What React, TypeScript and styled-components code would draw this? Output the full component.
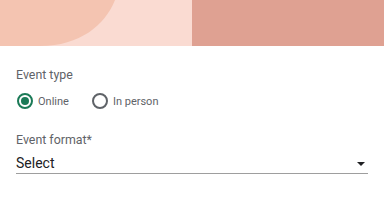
import React, { useState } from 'react';
import styled, { createGlobalStyle } from 'styled-components';

const GlobalStyle = createGlobalStyle`
  html, body {
    margin: 0;
    padding: 0;
    background: #ffffff;
    font-family: Roboto, "Liberation Sans", Arial, sans-serif;
  }
`;

const Page = styled.div`
  width: 384px;
  height: 216px;
  overflow: hidden;
  background: #ffffff;
`;

const Banner = styled.div`
  display: grid;
  grid-template-columns: 192px 1fr;
  height: 46px;
`;

const BannerLeft = styled.div`
  background: #fadbd2;
  svg {
    display: block;
  }
`;

const BannerRight = styled.div`
  background: #dfa192;
`;

const Form = styled.div`
  display: flex;
  flex-direction: column;
  padding: 22px 16px 0 16px;
`;

const Label = styled.div`
  font-size: 12.4px;
  line-height: 14px;
  color: #5f6368;
`;

const RadioRow = styled.div`
  display: flex;
  align-items: center;
  gap: 22px;
  margin-top: 11px;
  height: 16px;
`;

const RadioOption = styled.label`
  display: flex;
  align-items: center;
  gap: 5px;
  font-size: 11px;
  color: #5f6368;
  cursor: pointer;
  margin-left: 1px;
`;

const RadioCircle = styled.span<{ $checked: boolean }>`
  box-sizing: border-box;
  width: 16px;
  height: 16px;
  border-radius: 50%;
  border: 2px solid ${(p) => (p.$checked ? '#1b7a57' : '#5f6368')};
  display: flex;
  align-items: center;
  justify-content: center;
  &::after {
    content: '';
    width: 8px;
    height: 8px;
    border-radius: 50%;
    background: ${(p) => (p.$checked ? '#1b7a57' : 'transparent')};
  }
`;

const FormatLabel = styled(Label)`
  margin-top: 24px;
`;

const SelectBox = styled.div`
  display: flex;
  align-items: center;
  justify-content: space-between;
  height: 20px;
  margin-top: 6px;
  border-bottom: 1.5px solid #9e9e9e;
  padding-right: 3px;
`;

const SelectText = styled.span`
  font-size: 14px;
  color: #202124;
`;

const Caret = styled.span`
  width: 0;
  height: 0;
  border-left: 4px solid transparent;
  border-right: 4px solid transparent;
  border-top: 4px solid #202124;
  margin-top: 1px;
`;

const options = ['Online', 'In person'];

export default function App() {
  const [type, setType] = useState('Online');
  return (
    <Page>
      <GlobalStyle />
      <Banner>
        <BannerLeft>
          <svg width="192" height="46" viewBox="0 0 192 46">
            <path d="M0 0 H115 C105 25 80 46 40 46 H0 Z" fill="#f4c4b1" />
          </svg>
        </BannerLeft>
        <BannerRight />
      </Banner>
      <Form>
        <Label>Event type</Label>
        <RadioRow>
          {options.map((o) => (
            <RadioOption key={o} onClick={() => setType(o)}>
              <RadioCircle $checked={type === o} />
              {o}
            </RadioOption>
          ))}
        </RadioRow>
        <FormatLabel>Event format*</FormatLabel>
        <SelectBox>
          <SelectText>Select</SelectText>
          <Caret />
        </SelectBox>
      </Form>
    </Page>
  );
}
